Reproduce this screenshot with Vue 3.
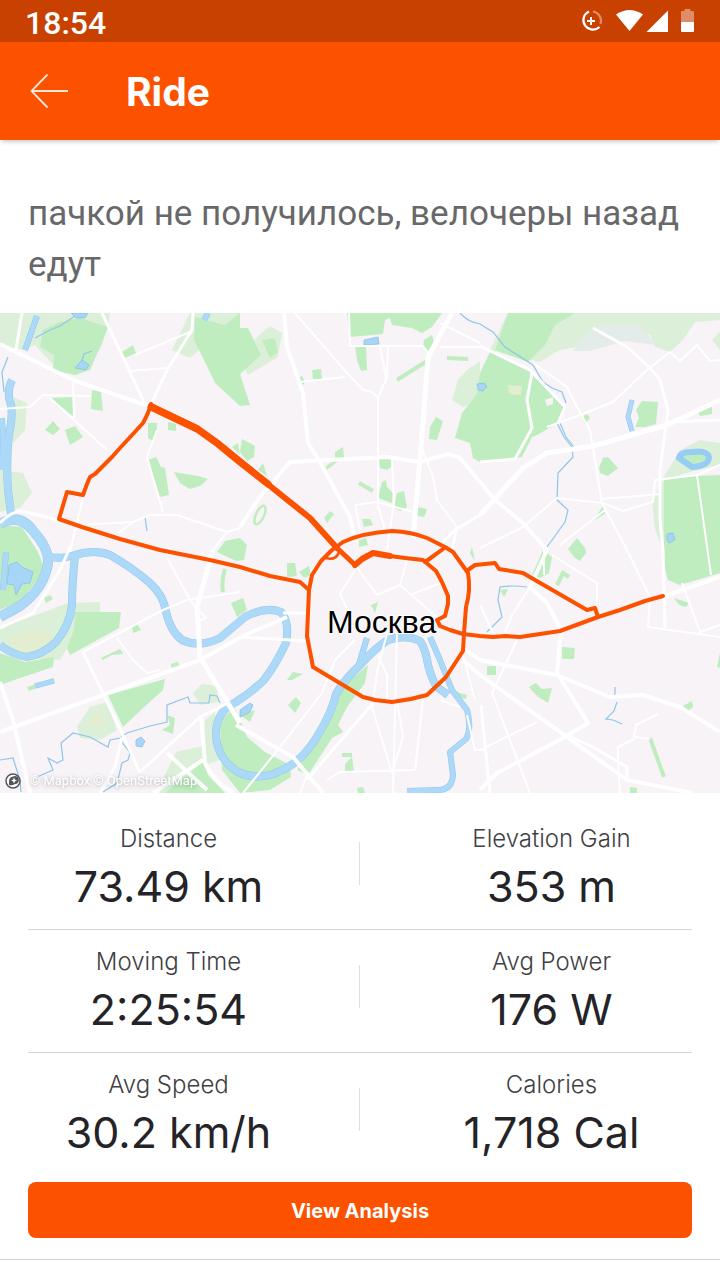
<template>
  <div class="screen">
    <div class="status-bar">
      <span class="clock">18:54</span>
      <svg class="status-icons" viewBox="0 0 118 26" aria-hidden="true">
        <g fill="none" stroke="#fff">
          <path d="M9 3.500A9.500 9.500 0 1 0 19.500 19" stroke-width="2.200" />
          <path d="M13 3.500A9.500 9.500 0 0 1 20.500 16" stroke-width="2.200" opacity="0.4" />
          <path d="M11 9v8M7 13h8" stroke-width="2" />
        </g>
        <path d="M36 6.500Q49.500-2.500 63 6.500L49.500 23Z" fill="#fff" />
        <path d="M88 2.500V24H66.500Z" fill="#fff" />
        <path d="M101 4q0-1 1-1h2.500V1h6v2h2.500q1 0 1 1v10h-13z" fill="#fff" opacity="0.4" />
        <path d="M101 14h13v9q0 1-1 1h-11q-1 0-1-1z" fill="#fff" />
      </svg>
    </div>

    <header class="app-bar">
      <button class="back" type="button" aria-label="Back">
        <svg viewBox="0 0 40 36" fill="none" stroke="#ffe6d9" stroke-width="1.800">
          <path d="M17.500 1.500L1.500 18L17.500 34.500M2 18H38" />
        </svg>
      </button>
      <h1>Ride</h1>
    </header>

    <p class="description">{{ description }}</p>

    <!-- map units start at y=313 -->
    <svg class="map" viewBox="0 313 720 480" role="img" aria-label="Ride map">
      <rect y="313" width="720" height="480" fill="#f7f3f7" />

      <g fill="#dcf0d9">
        <polygon v-for="p in paleAreas" :key="p" :points="p" />
      </g>
      <polygon points="573,351 582,338 600,325 640,325 656,345 625,341 590,351" fill="#e3ece9" />
      <g fill="#bfedbf">
        <polygon v-for="p in parks" :key="p" :points="p" />
      </g>
      <g fill="none" stroke="#bfedbf" stroke-width="4">
        <path d="M397 380L427 361M359 483L373 491M557 585L563 573L569 577M650 738L664 777M225 569Q221 582 223 592M342 755h10M28 689L54 680" />
        <ellipse cx="260" cy="515" rx="4" ry="10" transform="rotate(25 260 515)" stroke-width="2.500" />
      </g>
      <g fill="#e3edcf">
        <path d="M508 385l14 1-1 9-12-1zM6 640l30-12 18 8-12 14-18 4zM88 722l10-12 8 12-8 6z" />
      </g>
      <path d="M545 400l8-3 0 7-6 2z" fill="#f7f3f7" />

      <g v-for="layer in riverLayers" :key="layer.color" fill="none" :stroke="layer.color" stroke-linejoin="round">
        <path v-for="r in rivers" :key="r.d" :d="r.d" :stroke-width="r.w + layer.extra" />
      </g>
      <g fill="none" stroke="#8fc6ea" stroke-width="1.200">
        <path v-for="d in streams" :key="d" :d="d" />
      </g>
      <g fill="#a6d5f7" stroke="#86bde4" stroke-width="0.700">
        <polygon v-for="p in ponds" :key="p" :points="p" />
        <path fill="#bfedbf" stroke="#96cdf4" stroke-width="6" d="M679 458Q680 452 692 452Q707 450 709 457Q709 466 692 467Q686 463 679 458Z" />
      </g>

      <g fill="none" stroke="#fff" stroke-linejoin="round">
        <path v-for="r in roads" :key="r.d" :d="r.d" :stroke-width="r.w" />
      </g>

      <g fill="none" stroke="#fc5200" stroke-width="4" stroke-linejoin="round" stroke-linecap="round">
        <path d="M151 404Q149 412 143 423L133 434L120 448L112 457L95 474L90 477L87 484L83 495L67 492L64 502L59 519L82 527L120 539L160 550L210 560L240 567L270 576L300 582L309 590" />
        <path d="M151 406L197 428L218 443L240 461L275 490L310 518L337 548" stroke-width="6" />
        <path d="M151 407L197 429L218 444L240 462L268 484" stroke-width="7" />
        <path d="M337 548L355 565" stroke-width="5" />
        <path d="M355 565L362 559L373 553L390 556" stroke-width="6" />
        <path d="M390 556L405 558L423 560L436 571L442 582L448 596L448 604L445 616L437 620L440 626L450 630L463 634L480 636L493 637L505 636L520 637L560 631L598 617L620 610L645 601L663 596" />
        <path d="M309 590L312 575L321 561L332 550L343 542Q362 533 392 531Q412 532 427 538L445 547L453 552L463 566L468 573Q471 590 466 607L464 633L463 651L446 677L427 695Q410 700 392 702L375 700L363 697L313 667L307 636L309 590" />
        <path d="M425 562L432 557L443 549M468 570L475 565L495 563L499 569L523 573L535 580L587 610L595 608L598 617" />
        <path d="M326 558Q336 561 339 552" stroke-width="2.500" />
      </g>

      <text class="city" x="327" y="633">Москва</text>

      <circle cx="13" cy="781" r="7" fill="#fff" stroke="#55565a" stroke-width="1.500" />
      <path d="M9 785Q8 777 13 776.500A4 4 0 1 1 15 784Q12 786 9 785Z" fill="#55565a" />
      <path d="M14 777.500l1 2.200 2 .8-2 .8-1 2.200-1-2.200-2-.8 2-.8z" fill="#fff" />
      <text class="attribution" x="30" y="785">© Mapbox © OpenStreetMap</text>
    </svg>

    <section class="stats">
      <div v-for="(row, i) in stats" :key="i" class="stat-row">
        <div v-for="stat in row" :key="stat.label" class="stat">
          <span class="label">{{ stat.label }}</span>
          <span class="value">{{ stat.value }}</span>
        </div>
      </div>
      <button class="analysis" type="button">View Analysis</button>
    </section>
  </div>
</template>

<script setup>
const description = 'пачкой не получилось, велочеры назад едут';

const stats = [
  [
    { label: 'Distance', value: '73.49 km' },
    { label: 'Elevation Gain', value: '353 m' },
  ],
  [
    { label: 'Moving Time', value: '2:25:54' },
    { label: 'Avg Power', value: '176 W' },
  ],
  [
    { label: 'Avg Speed', value: '30.2 km/h' },
    { label: 'Calories', value: '1,718 Cal' },
  ],
];

const paleAreas = [
  '0,313 110,313 108,327 100,350 60,372 35,345 25,350 0,345',
  '190,313 240,313 240,345 205,345 190,358 172,350',
  '257,337 270,326 282,333 278,357 248,375 240,360',
  '480,361 467,370 458,380 452,400 463,407 480,400',
  '508,313 720,313 720,320 695,322 683,340 670,352 655,347 650,335 610,326 590,345 560,350 540,362 490,350',
  '712,340 720,332 720,350',
  '13,397 27,403 25,430 13,443',
  '0,470 23,473 32,493 20,508 0,512',
  '0,628 50,610 67,603 100,602 100,612 72,640 60,660 20,658 0,650',
  '77,727 90,707 107,702 117,730 100,740 80,738',
  '193,693 202,684 217,686 218,702 200,705',
  '160,785 176,752 203,746 203,765 180,793 160,793',
  '680,450 700,440 720,443 720,465 690,472 662,480',
  '652,500 664,480 664,550 655,530',
  '205,720 215,712 220,760 205,765',
];

const parks = [
  '60,322 80,318 108,327 100,347 90,370 75,375 53,370 54,355 40,347 43,330',
  '195,317 225,325 240,313 240,328 248,328 261,355 240,374 250,405 240,406 215,383 205,362 194,340',
  '262,340 275,338 278,352 270,358',
  '122,352 133,345 136,353 125,358',
  '92,390 101,392 103,411 91,409',
  '50,398 73,397 74,417',
  '45,430 53,421 60,429 53,435',
  '65,430 75,426 83,437 70,445',
  '148,423 157,423 157,433 153,441 148,438',
  '168,422 176,424 176,431 168,430',
  '148,460 156,457 161,467 165,468 169,495 160,497',
  '174,472 198,476 208,479 200,486 190,489 180,483',
  '232,447 238,443 240,455',
  '217,552 225,541 240,538 247,545 244,560 236,561',
  '347,313 442,313 432,327 422,333 412,328 392,325 390,318 385,320 383,334 350,337',
  '355,346 366,346 367,370 361,371 357,360',
  '424,340 432,335 434,343 429,353 423,347',
  '447,356 468,357 468,361 447,360',
  '480,373 490,352 530,372 565,407 560,422 537,435 532,437 522,457 480,462 473,458 470,443 455,438 462,413 477,394',
  '508,313 575,313 555,325 545,345 528,362 495,350',
  '297,378 302,376 305,382 303,385 298,383',
  '312,370 321,369 322,379 313,379',
  '430,427 436,417 443,421 437,440 429,439',
  '242,439 255,446 254,457 247,461 240,452',
  '258,470 263,463 267,476',
  '335,452 343,447 344,457 337,462 327,470 326,466 335,460',
  '379,459 392,459 391,467 387,470 380,468',
  '382,482 386,480 387,487 393,493 392,503 378,498',
  '397,493 404,491 407,507 401,511 394,508',
  '417,507 427,509 424,517 417,516',
  '324,518 330,511 334,514 327,523',
  '362,519 370,519 373,525 364,527',
  '359,540 366,538 368,545 359,547',
  '582,417 587,414 590,418 585,424',
  '635,427 639,418 636,410 642,401 658,402 656,424 645,427',
  '697,410 712,407 712,414 700,416',
  '599,468 603,458 608,457 618,468 608,476 600,473',
  '664,480 697,476 720,475 720,573 680,585 668,580 664,565',
  '593,521 603,506 605,514',
  '568,549 577,538 585,548 586,553 580,561 575,558',
  '543,550 552,557 549,573 540,578 532,575',
  '500,590 508,589 504,597',
  '674,598 689,603 686,607 679,605',
  '562,647 575,648 574,659 562,659',
  '529,687 536,683 542,689 552,688 548,703 537,696',
  '487,666 496,666 496,675 487,675',
  '683,706 692,701 693,707 688,711',
  '630,787 637,788 637,793 630,793',
  '717,667 720,652 720,668',
  '287,563 295,563 297,576 287,577',
  '299,572 309,566 311,575 304,578',
  '231,603 243,598 247,610 237,617',
  '371,605 378,602 375,613',
  '287,680 293,672 303,674 292,680',
  '288,705 296,697 301,703 295,713',
  '368,665 365,683 347,707 338,725 343,732 332,738 308,775 297,770 310,750 325,720 335,695 350,680',
  '345,764 352,757 354,771 345,773',
  '220,720 235,708 247,737 265,752 290,765 291,777 270,790 240,793 222,770',
  '165,793 203,762 208,775 225,793',
  '240,715 255,710 250,722',
  '457,692 467,695 466,699 459,698',
  '357,788 363,787 365,793 358,793',
  '470,553 472,547 475,561',
  '75,612 121,612 119,628 70,655 67,648 74,630',
  '0,653 25,662 54,657 53,667 20,678 0,685',
  '132,626 137,624 141,630 133,633',
  '101,658 120,649 123,654 112,655 103,660',
  '171,664 178,662 180,667 172,669',
  '44,598 50,595 53,599 46,603',
  '108,695 165,679 163,690 143,708 123,727',
  '167,715 175,718 173,734 162,730 170,725',
  '0,525 22,527 38,552 45,570 22,600 0,610',
];

// outline first, then the lighter fill over it
const riverLayers = [
  { color: '#93c8ec', extra: 1 },
  { color: '#add9f8', extra: 0 },
];

const rivers = [
  { d: 'M12 380Q6 392 11 405Q13 418 9 435Q6 460 8 490L11 514', w: 7 },
  { d: 'M2 418Q4 440 2 470', w: 5 },
  { d: 'M37 316L25 350', w: 5 },
  { d: 'M208 313L204 320', w: 5 },
  { d: 'M0 524Q20 512 34 532Q52 552 47 568Q42 590 20 606L0 617', w: 9 },
  { d: 'M48 556Q58 560 75 555Q95 549 110 555Q130 566 150 583Q164 596 166 612Q171 632 182 640Q200 648 220 638L245 617Q265 606 281 612Q290 622 286 643Q275 666 264 680Q252 692 236 702Q216 712 216 733Q216 758 238 772Q260 782 282 770Q302 762 318 735Q332 712 336 694Q344 680 360 665Q375 648 388 640Q405 634 420 641Q426 650 428 665Q432 680 437 687L448 695', w: 7 },
  { d: 'M75 556Q72 585 72 605Q70 625 56 642Q42 655 27 657Q12 655 0 645', w: 7 },
  { d: 'M367 638L359 664', w: 5 },
  { d: 'M430 637L440 660L452 690L467 710Q472 728 466 739L450 752L453 775Q452 790 438 790L407 791', w: 5 },
  { d: 'M632 400L628 417L632 431', w: 4 },
  { d: 'M35 686L54 681', w: 4 },
  { d: 'M3 590L6 552', w: 5 },
];

const streams = [
  'M8 357L2 372L4 392',
  'M35 338L50 330L60 326L75 316',
  'M82 360L84 354L92 351',
  'M460 313Q468 322 480 324L493 332L505 347L533 365L543 382L552 388L562 392L566 403',
  'M557 423L564 437L572 447L573 457L558 473L557 500L568 510L565 522L547 547',
  'M560 423L566 437L574 447',
  'M527 587Q512 585 500 587L498 600L502 617L487 632',
  'M615 687V695M617 702L614 711L606 719L613 720L622 724',
  'M220 703L217 696L210 695L209 703L190 703L188 697L167 705L167 722L150 726L127 733L120 738L110 740L108 747L90 737L73 733L61 743L63 760L57 763L48 758L53 770L37 777',
  'M122 742L130 753L128 760L122 763L117 783L103 792',
  'M0 760L13 758L20 780L21 792',
  'M145 517L147 531',
];

const ponds = [
  '71,313 88,313 85,318 76,318',
  '75,368 82,360 89,365 86,370',
  '364,340 378,337 379,344 364,345',
  '477,384 484,383 487,387 483,391 478,390',
  '667,534 673,533 675,540 669,543 667,540',
  '136,740 141,737 145,741 142,747 136,746',
  '9,565 17,562 22,567 33,572 30,583 22,584 16,595 14,585 7,584',
  '240,710 250,703 253,705 250,712 240,717',
];

const roads = [
  { d: 'M0 344L73 380L151 407', w: 4 },
  { d: 'M102 313L130 372L145 404M193 313L192 330L167 370L152 402', w: 3 },
  { d: 'M22 313L16 350', w: 3 },
  { d: 'M135 355L190 332M130 371L167 368M0 409L30 407L43 395L90 396M50 398L107 450M73 383L74 418', w: 2 },
  { d: 'M157 430L147 457L163 513M83 497L70 552M133 522L118 533M78 525L133 522L150 515L177 515L227 532L240 528M227 532L213 550', w: 2 },
  { d: 'M0 523Q10 512 22 511L58 520', w: 3 },
  { d: 'M284 313L287 347L303 393L308 443L317 457L350 517L354 535', w: 4 },
  { d: 'M295 313L347 373L363 390L372 392L378 398L378 502M378 398L387 377L388 347M380 347L386 378', w: 2 },
  { d: 'M452 313L428 357L420 460L413 538', w: 5 },
  { d: 'M240 527L260 497L290 462L387 457L420 462L448 454L460 458L480 482L495 500L523 523L547 550', w: 4 },
  { d: 'M349 313L350 346L423 346L429 354M440 347H480M440 323L480 343', w: 2 },
  { d: 'M300 382L345 377M422 448L433 477L437 500L457 527M392 460L394 503L387 550M355 505L377 502L413 512M355 505L360 530M377 502L385 530', w: 2 },
  { d: 'M480 515L455 530L440 545M457 527L450 560', w: 3 },
  { d: 'M480 346L530 370L565 407L558 423', w: 3 },
  { d: 'M533 363L567 387L577 407L590 430L602 503L627 550L650 597L648 627L720 637', w: 2 },
  { d: 'M593 328L627 347L648 366L660 380L668 410L660 470L660 520L663 550L665 628', w: 3 },
  { d: 'M720 360L710 361L697 345L680 361L670 352L647 370L613 402L580 415L547 427', w: 2 },
  { d: 'M480 515L523 468L547 453L593 446L667 425L720 400', w: 5 },
  { d: 'M667 422L720 420M480 462L515 459L532 428L527 400L532 373', w: 3 },
  { d: 'M480 548L523 527L557 498L603 503L623 511L653 502L655 480L697 475L720 465M602 499L661 494M605 510L560 545', w: 2 },
  { d: 'M697 475L711 575', w: 2 },
  { d: 'M720 577L663 597', w: 4 },
  { d: 'M682 583L700 632L720 625M552 555L597 583L597 610M544 550V575', w: 2 },
  { d: 'M547 550L530 587L547 603L561 630L557 673L588 723L563 738L497 773L480 790', w: 4 },
  { d: 'M463 648L480 660L557 675L610 697L643 695L680 707L720 732', w: 4 },
  { d: 'M463 660L480 675L560 732L627 780L693 793', w: 4 },
  { d: 'M560 732L593 747L627 767L627 780M481 705L490 793', w: 3 },
  { d: 'M517 640L492 693L530 793M480 750L537 722M658 714L636 725L634 737L650 739M634 739L618 747V762L620 793', w: 2 },
  { d: 'M530 587L512 615L505 632M480 605L493 633', w: 2 },
  { d: 'M0 732L200 660L245 635L287 617', w: 4 },
  { d: 'M0 682L13 720L30 793', w: 4 },
  { d: 'M0 628L33 613L60 570L71 545', w: 3 },
  { d: 'M83 652L122 733L140 773M122 737L115 767L100 793', w: 3 },
  { d: 'M213 550L197 607L200 657L240 723', w: 5 },
  { d: 'M167 558L192 603L206 618L195 622M83 652L163 610L187 600L240 592M117 638L133 660L147 673L160 670', w: 2 },
  { d: 'M228 703L200 717L140 772', w: 3 },
  { d: 'M201 717L205 763Q212 780 233 793M203 760L153 793M167 753L207 790', w: 4 },
  { d: 'M236 725L293 757L323 793', w: 4 },
  { d: 'M243 793L280 747L322 693L335 660L355 640', w: 2 },
  { d: 'M240 637L307 641M283 613H307M307 780L373 703', w: 3 },
  { d: 'M388 630L378 667L372 707L392 773M397 633L393 793M397 700L403 737L392 773M423 700L415 770M327 780L340 772L415 770M300 793L308 772', w: 2 },
  { d: 'M355 565L377 595L400 585L440 620M355 570L340 594L350 615M400 585L407 560M410 595L440 583M378 655L387 675V700', w: 2 },
  { d: 'M463 655L475 700M467 715L475 750H485M440 700L460 707', w: 2 },
];
</script>

<style>
body {
  background: #fff;
}
</style>

<style scoped>
.screen {
  font-family: Inter, Roboto, sans-serif;
  color: #242428;
  border-bottom: 1px solid #d6d6d8;
  padding-bottom: 21px;
}

.status-bar {
  display: flex;
  align-items: center;
  justify-content: space-between;
  height: 42px;
  padding: 0 22px 0 25px;
  background: #c94100;
}

.clock {
  font: 500 32px/40px Roboto, sans-serif;
  padding-top: 3px;
  color: #fff;
}

.status-icons {
  width: 118px;
  height: 26px;
}

.app-bar {
  display: flex;
  align-items: center;
  gap: 56px;
  height: 98px;
  padding: 0 30px;
  background: #fc5200;
  box-shadow: 0 4px 4px -2px rgba(0, 0, 0, 0.2);
}

.back {
  width: 40px;
  height: 36px;
  padding: 0;
  border: none;
  background: none;
  cursor: pointer;
}

.back svg {
  display: block;
  width: 100%;
}

h1 {
  margin: 0;
  padding-top: 2px;
  font-size: 39px;
  line-height: 48px;
  font-weight: 700;
  color: #fff;
}

.description {
  margin: 0;
  padding: 48px 28px 23px;
  font: 400 35px/51px Roboto, sans-serif;
  color: #68686a;
}

.map {
  display: block;
  width: 100%;
}

.city {
  font: 32px "Liberation Sans", sans-serif;
  fill: #000;
  stroke: #fff;
  stroke-width: 2px;
  paint-order: stroke;
}

.attribution {
  font: 13px Roboto, sans-serif;
  fill: #fff;
  filter: drop-shadow(0 1px 2px rgba(0, 0, 0, 0.3));
}

.stats {
  padding: 14px 28px 0;
}

.stat-row {
  position: relative;
  display: grid;
  grid-template-columns: 1fr 1fr;
  column-gap: 102px;
  padding: 16px 0 19px;
  border-bottom: 1px solid #d6d6d8;
}

.stat-row:nth-child(3) {
  border-bottom: none;
}

.stat-row::after {
  content: "";
  position: absolute;
  top: 35px;
  left: 50%;
  height: 43px;
  margin-left: -1px;
  border-left: 1px solid #dfdfe2;
}

.stat {
  display: flex;
  flex-direction: column;
  gap: 7px;
  text-align: center;
  white-space: nowrap;
}

.label {
  font-size: 24px;
  line-height: 32px;
  font-weight: 300;
  color: #3f3f45;
}

.value {
  font-size: 43px;
  line-height: 48px;
}

.analysis {
  display: block;
  width: 100%;
  height: 56px;
  margin-top: 7px;
  padding: 2px 0 0;
  border: none;
  border-radius: 8px;
  background: #fc5200;
  color: #fff;
  font: 700 20px/28px Inter, sans-serif;
  cursor: pointer;
}
</style>
